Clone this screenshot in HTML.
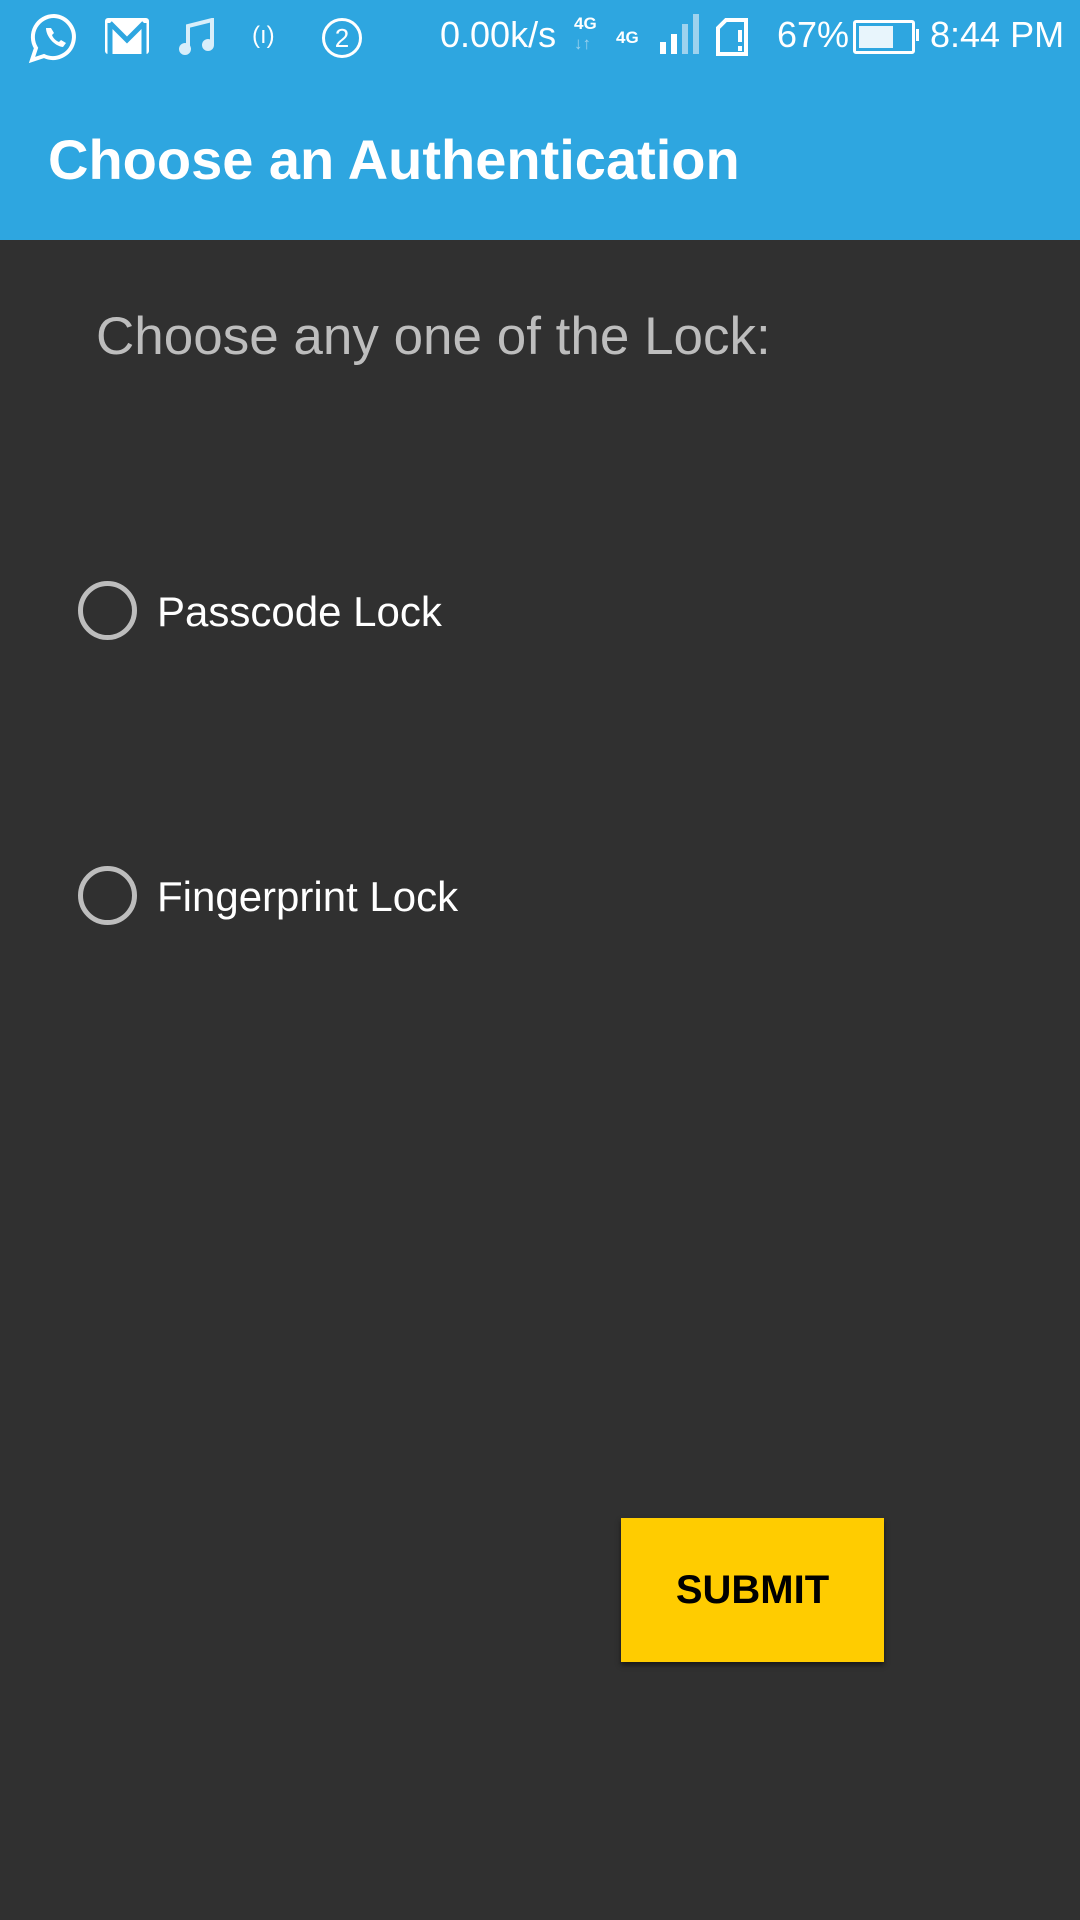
<!DOCTYPE html>
<html><head><meta charset="utf-8"><style>
body{margin:0;width:1080px;height:1920px;background:#303030;font-family:"Liberation Sans",sans-serif;overflow:hidden;position:relative}
.bar{position:absolute;left:0;top:0;width:1080px;height:240px;background:#2ea6e0}
.t{position:absolute;white-space:nowrap}
.radio{position:absolute;width:49px;height:49px;border:5px solid #bdbdbd;border-radius:50%}
</style></head><body>
<div class="bar"></div>
<svg class="t" style="left:28px;top:12px" width="52" height="52" viewBox="0 0 52 52"><path d="M26 4a21 21 0 0 0-18 32l-4 12 12-4A21 21 0 1 0 26 4z" fill="none" stroke="#fff" stroke-width="4"/><path d="M18 16c0 8 8 18 17 19l3-4-5-3-2 2c-3-1-6-4-7-7l2-2-3-5z" fill="#fff"/></svg>
<svg class="t" style="left:105px;top:18px" width="44" height="36"><rect width="44" height="36" rx="3" fill="#fff"/><path d="M5 5v31M39 5v31M5 5l17 17 17-17" stroke="#2ea6e0" stroke-width="5" fill="none"/></svg>
<svg class="t" style="left:178px;top:18px" width="38" height="38"><path d="M10 30V8l24-6v24" stroke="#d8eefa" stroke-width="4" fill="none"/><circle cx="7" cy="31" r="6" fill="#d8eefa"/><circle cx="30" cy="27" r="6" fill="#d8eefa"/></svg>
<div class="t" style="left:252px;top:22px;color:#fff;font-size:24px">(ı)</div>
<div class="t" style="left:322px;top:18px;width:34px;height:34px;border:3px solid #fff;border-radius:50%;color:#fff;font-size:26px;text-align:center;line-height:34px">2</div>
<div class="t" style="left:440px;top:14px;color:#fff;font-size:36px">0.00k/s</div>
<div class="t" style="left:574px;top:14px;color:#fff;font-size:17px;font-weight:bold">4G</div>
<div class="t" style="left:574px;top:34px;color:#9dd2ee;font-size:17px">↓↑</div>
<div class="t" style="left:616px;top:28px;color:#fff;font-size:17px;font-weight:bold">4G</div>
<svg class="t" style="left:660px;top:14px" width="42" height="40"><rect x="0" y="28" width="6" height="12" fill="#fff"/><rect x="11" y="20" width="6" height="20" fill="#fff"/><rect x="22" y="10" width="6" height="30" fill="#9dd2ee"/><rect x="33" y="0" width="6" height="40" fill="#9dd2ee"/></svg>
<svg class="t" style="left:716px;top:18px" width="32" height="38"><path d="M10 2h20v34H2V10z" fill="none" stroke="#fff" stroke-width="4"/><rect x="22" y="12" width="4" height="12" fill="#fff"/><rect x="22" y="28" width="4" height="5" fill="#fff"/></svg>
<div class="t" style="left:777px;top:14px;color:#fff;font-size:36px">67%</div>
<div class="t" style="left:853px;top:20px;width:56px;height:28px;border:3px solid #fff;border-radius:3px"><div style="margin:3px;width:34px;height:22px;background:#e8f5fc"></div></div>
<div class="t" style="left:916px;top:29px;width:3px;height:12px;background:#fff"></div>
<div class="t" style="left:930px;top:14px;color:#fff;font-size:36px">8:44 PM</div>
<div class="t" style="left:48px;top:122px;color:#fff;font-size:56px;font-weight:bold;line-height:76px">Choose an Authentication</div>
<div class="t" style="left:96px;top:305px;color:#bdbdbd;font-size:53px;line-height:64px">Choose any one of the Lock:</div>
<div class="radio" style="left:78px;top:581px"></div>
<div class="t" style="left:157px;top:586px;color:#fff;font-size:42px;line-height:52px">Passcode Lock</div>
<div class="radio" style="left:78px;top:866px"></div>
<div class="t" style="left:157px;top:871px;color:#fff;font-size:42px;line-height:52px">Fingerprint Lock</div>
<div class="t" style="left:621px;top:1518px;width:263px;height:144px;background:#ffcc00;box-shadow:0 3px 5px rgba(0,0,0,.5);color:#000;font-weight:bold;font-size:40px;text-align:center;line-height:144px">SUBMIT</div>
</body></html>
